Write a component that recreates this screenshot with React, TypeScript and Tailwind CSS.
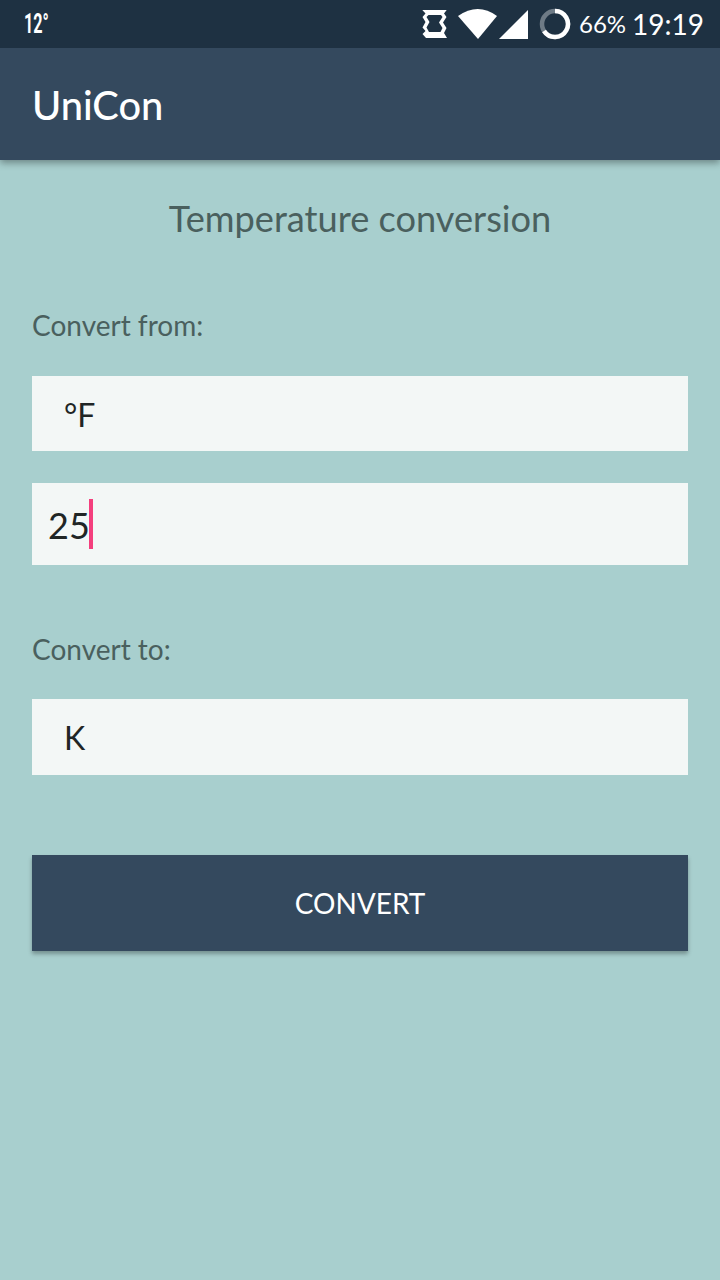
export default function App() {
  return (
    <div className="flex h-[1280px] w-[720px] flex-col overflow-hidden bg-[#a8cfce] font-[Lato,sans-serif] text-[#4a605e]">
      <header className="relative bg-[#34495e] shadow-[0_3px_7px_rgba(0,0,0,0.35)]">
        <div className="flex h-12 items-center bg-[#1e3142] pr-4 pl-6 text-white">
          <div className="flex h-8 w-8 items-center whitespace-nowrap">
            <span className="origin-left scale-x-[0.6] font-[Roboto,sans-serif] text-[27px] leading-8 font-bold">12°</span>
          </div>
          <div className="ml-auto flex items-center">
            <svg width="154" height="48" viewBox="418 0 154 48" fill="none">
              <path d="M422.300 10H446.700L444 13.500L446.500 17L443 22.500L446.500 28L444 33L447 38H426L422.500 34L425.500 31L422.500 27.500L425.500 22L422.500 17L425.500 13.500ZM428.500 15L426.500 17L429.500 22L426.500 27.500L429 32H440.500L442.500 28L439 22.500L442.500 17L441 15Z" fill="white" fillRule="evenodd" />
              <path d="M458 16Q478 2 497 16L478 39Z" fill="white" />
              <path d="M499 39L528 10V39Z" fill="white" />
              <circle cx="555" cy="24" r="13" stroke="#6e7b86" strokeWidth="4.5" />
              <path d="M555 11A13 13 0 1 1 544 31" stroke="white" strokeWidth="4.5" />
            </svg>
            <span className="ml-[7px] w-[53px] text-[24px] leading-none">66%</span>
            <span className="text-[28px] leading-none">19:19</span>
          </div>
        </div>
        <h1 className="flex h-28 items-center pt-0.5 pl-8 text-[39.8px] font-medium text-white">UniCon</h1>
      </header>
      <main className="flex flex-col px-8 pt-[31px]">
        <h2 className="text-center text-[36.2px] leading-[54px]">Temperature conversion</h2>
        <label className="mt-[63px] text-[28px] leading-[34px]">Convert from:</label>
        <div className="mt-[34px] flex h-[75px] items-center bg-[#f3f7f6] pt-0.5 pl-8 text-[32px] text-[#202525]">°F</div>
        <div className="mt-8 flex h-[82px] items-center bg-[#f3f7f6] pl-4 text-[36px] text-[#202525]">
          <span className="pt-0.5">25</span><span className="-ml-px h-[50px] w-1 bg-[#f43f7d]" />
        </div>
        <label className="mt-[67px] text-[28px] leading-[34px]">Convert to:</label>
        <div className="mt-[33px] flex h-[76px] items-center bg-[#f3f7f6] pt-0.5 pl-8 text-[32px] text-[#202525]">K</div>
        <button className="mt-20 h-24 bg-[#34495e] text-[28px] text-white shadow-[0_3px_4px_rgba(0,0,0,0.3)]">CONVERT</button>
      </main>
    </div>
  );
}
